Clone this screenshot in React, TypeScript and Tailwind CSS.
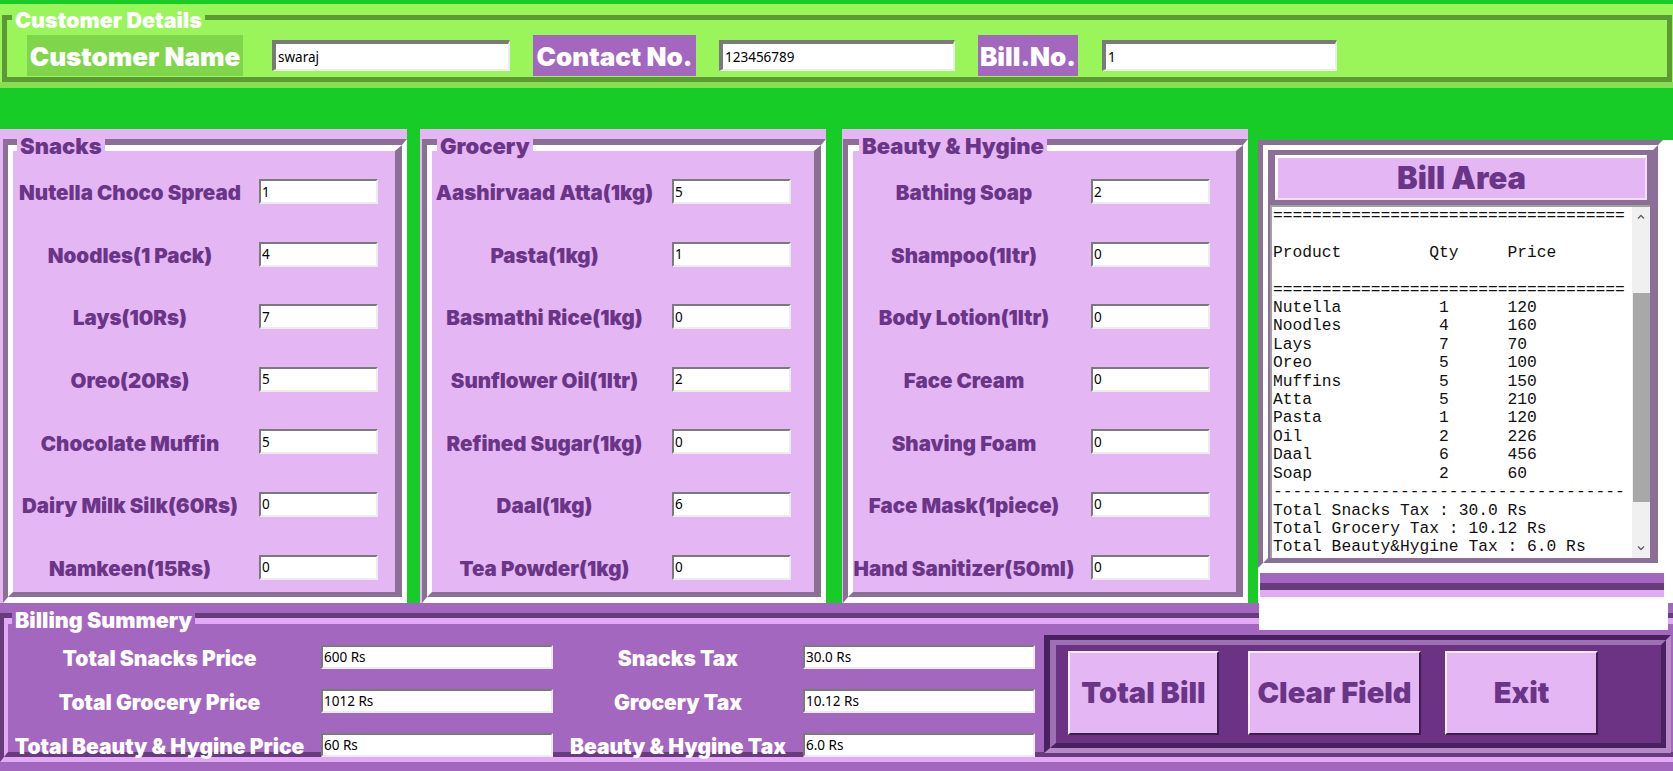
import React from "react";

const heavy = "font-['Inter',sans-serif] font-black";
const entryFont = "font-['Noto_Sans',sans-serif] text-[13.5px] text-black";

const snacks: [string, string][] = [
  ["Nutella Choco Spread", "1"],
  ["Noodles(1 Pack)", "4"],
  ["Lays(10Rs)", "7"],
  ["Oreo(20Rs)", "5"],
  ["Chocolate Muffin", "5"],
  ["Dairy Milk Silk(60Rs)", "0"],
  ["Namkeen(15Rs)", "0"],
];

const grocery: [string, string][] = [
  ["Aashirvaad Atta(1kg)", "5"],
  ["Pasta(1kg)", "1"],
  ["Basmathi Rice(1kg)", "0"],
  ["Sunflower Oil(1ltr)", "2"],
  ["Refined Sugar(1kg)", "0"],
  ["Daal(1kg)", "6"],
  ["Tea Powder(1kg)", "0"],
];

const beauty: [string, string][] = [
  ["Bathing Soap", "2"],
  ["Shampoo(1ltr)", "0"],
  ["Body Lotion(1ltr)", "0"],
  ["Face Cream", "0"],
  ["Shaving Foam", "0"],
  ["Face Mask(1piece)", "0"],
  ["Hand Sanitizer(50ml)", "0"],
];

const billItems: [string, string, string][] = [
  ["Nutella", "1", "120"],
  ["Noodles", "4", "160"],
  ["Lays", "7", "70"],
  ["Oreo", "5", "100"],
  ["Muffins", "5", "150"],
  ["Atta", "5", "210"],
  ["Pasta", "1", "120"],
  ["Oil", "2", "226"],
  ["Daal", "6", "456"],
  ["Soap", "2", "60"],
];

const billLines = [
  "====================================",
  "",
  "Product         Qty     Price",
  "",
  "====================================",
  ...billItems.map(([n, q, p]) => n.padEnd(17) + q.padEnd(7) + p),
  "------------------------------------",
  "Total Snacks Tax : 30.0 Rs",
  "Total Grocery Tax : 10.12 Rs",
  "Total Beauty&Hygine Tax : 6.0 Rs",
];

const summary = [
  ["Total Snacks Price", "600 Rs", "Snacks Tax", "30.0 Rs"],
  ["Total Grocery Price", "1012 Rs", "Grocery Tax", "10.12 Rs"],
  ["Total Beauty & Hygine Price", "60 Rs", "Beauty & Hygine Tax", "6.0 Rs"],
];

function Entry({ value, className = "" }: { value: string; className?: string }) {
  return (
    <input
      readOnly
      value={value}
      className={`bg-white outline-none pl-[1px] border-t-2 border-l-2 border-b-2 border-r-2 border-t-[#7a7a7a] border-l-[#7a7a7a] border-b-[#ececec] border-r-[#ececec] ${entryFont} ${className}`}
    />
  );
}

function Panel({
  title,
  items,
  cols,
  className,
}: {
  title: string;
  items: [string, string][];
  cols: string;
  className: string;
}) {
  return (
    <div className={`relative bg-[#e4b6f4] pt-[10px] h-[474px] ${className}`}>
      <span className={`absolute top-[6px] left-[17px] px-[3px] bg-[#e4b6f4] text-[22px] leading-[22px] text-[#6a3586] ${heavy}`}>
        {title}
      </span>
      <div className="h-full border-t-[6px] border-l-[5px] border-b-[6px] border-r-[5px] border-t-[#8b6f96] border-l-[#8b6f96] border-b-white border-r-white">
        <div className="h-full pt-[28px] border-t-[6px] border-l-[5px] border-b-[5px] border-r-[7px] border-t-white border-l-white border-b-[#8b6f96] border-r-[#8b6f96]">
          <div className={`grid ${cols} gap-y-[37.6px]`}>
            {items.map(([label, qty]) => (
              <React.Fragment key={label}>
                <div className={`h-[25px] pt-[4px] flex items-center justify-center whitespace-nowrap text-[20.5px] text-[#6a3586] ${heavy}`}>
                  {label}
                </div>
                <Entry value={qty} className="w-[119px] h-[25px]" />
              </React.Fragment>
            ))}
          </div>
        </div>
      </div>
    </div>
  );
}

function Chevron({ up }: { up?: boolean }) {
  return (
    <svg width="10" height="10" viewBox="0 0 10 10" className="block">
      <polyline
        points={up ? "2,6.5 5,3.5 8,6.5" : "2,3.5 5,6.5 8,3.5"}
        fill="none"
        stroke="#606060"
        strokeWidth="1.3"
      />
    </svg>
  );
}

function BillArea() {
  return (
    <div className="ml-[10px] mt-[11px] w-[415px] h-[463px] bg-white">
      <div className="w-[405px] h-[428px] border-t-[5px] border-l-[5px] border-b-[5px] border-r-[5px] border-t-[#8b6f96] border-l-[#8b6f96] border-b-white border-r-white">
        <div className="h-full bg-[#8b6f96] flex flex-col border-t-[5px] border-l-[5px] border-b-[5px] border-r-[5px] border-t-white border-l-white border-b-[#8b6f96] border-r-[#8b6f96]">
          <div className="h-[55px] pt-[5px] pl-[7px] pr-[6px] pb-[5px]">
            <div className={`h-full bg-[#e4b6f4] flex items-center justify-center border-t-[3px] border-l-[3px] border-b-[2px] border-r-[2px] border-t-white border-l-white border-b-[#f3ddf9] border-r-[#f3ddf9] text-[31px] text-[#6a3586] ${heavy}`}>
              Bill Area
            </div>
          </div>
          <div className="flex-1 ml-[2px] mr-[3px] bg-white flex overflow-hidden border-t-2 border-l-2 border-t-[#a0a0a0] border-l-[#a0a0a0]">
            <pre className="flex-1 pl-[1px] overflow-hidden font-['Liberation_Mono',monospace] text-[16.3px] leading-[18.4px] text-[#111]">
              {billLines.join("\n")}
            </pre>
            <div className="w-[18px] bg-[#f0f0f0] flex flex-col items-center">
              <div className="h-[20px] flex items-center justify-center">
                <Chevron up />
              </div>
              <div className="mt-[66px] w-[17px] h-[209px] bg-[#a8a8a8]" />
              <div className="flex-1" />
              <div className="h-[20px] flex items-center justify-center">
                <Chevron />
              </div>
            </div>
          </div>
        </div>
      </div>
      <div className="mt-[5px] ml-[2px] w-[404px]">
        <div className="h-[10px] bg-[#a467bf]" />
        <div className="h-[7px] bg-[#683b7d]" />
        <div className="h-[7px] bg-[#e2a9f5]" />
      </div>
    </div>
  );
}

function Button({ label, className }: { label: string; className: string }) {
  return (
    <button
      type="button"
      className={`h-[84px] bg-[#e4b6f4] flex items-center justify-center whitespace-nowrap border-t-2 border-l-2 border-b-2 border-r-2 border-t-[#fbeeff] border-l-[#fbeeff] border-b-[#3d1d4b] border-r-[#3d1d4b] text-[29px] text-[#6a3586] ${heavy} ${className}`}
    >
      {label}
    </button>
  );
}

export default function App() {
  return (
    <div className="relative w-[1673px] h-[771px] overflow-hidden bg-[#18cc28]">
      {/* Customer details */}
      <div className="pt-[4px]">
        <div className="relative bg-[#9af55b] pt-[11px] pl-[2px] pr-[1px] border-b-[6px] border-b-[#86de52]">
          <span className={`absolute top-[5px] left-[12px] px-[3px] bg-[#9af55b] text-white text-[21.5px] leading-[22px] ${heavy}`}>
            Customer Details
          </span>
          <div className="h-[67px] border-[5px] border-[#5d9a35] flex items-start pt-[15px]">
            <div className={`ml-[20px] w-[216px] h-[41px] pt-[2px] bg-[#7fd64b] flex items-center justify-center whitespace-nowrap text-white text-[26px] ${heavy}`}>
              Customer Name
            </div>
            <Entry value="swaraj" className="ml-[29px] mt-[5px] w-[238px] h-[31px] border-t-4 border-l-4 pl-[2px]" />
            <div className={`ml-[23px] w-[163px] h-[41px] pt-[2px] bg-[#a467bf] flex items-center justify-center whitespace-nowrap text-white text-[26px] ${heavy}`}>
              Contact No.
            </div>
            <Entry value="123456789" className="ml-[23px] mt-[5px] w-[236px] h-[31px] border-t-4 border-l-4 pl-[2px]" />
            <div className={`ml-[23px] w-[100px] h-[41px] pt-[2px] bg-[#a467bf] flex items-center justify-center whitespace-nowrap text-white text-[26px] ${heavy}`}>
              Bill.No.
            </div>
            <Entry value="1" className="ml-[24px] mt-[5px] w-[235px] h-[31px] border-t-4 border-l-4 pl-[2px]" />
          </div>
        </div>
      </div>

      {/* Product panels and bill */}
      <div className="mt-[41px] flex items-start h-[474px]">
        <Panel title="Snacks" items={snacks} cols="grid-cols-[234px_119px] gap-x-[12px]" className="w-[407px] pl-[3px]" />
        <Panel title="Grocery" items={grocery} cols="grid-cols-[225px_119px] gap-x-[15px]" className="ml-[13px] w-[406px] pl-[2px]" />
        <Panel title="Beauty & Hygine" items={beauty} cols="grid-cols-[222px_119px] gap-x-[16px]" className="ml-[16px] w-[406px] pl-[1px]" />
        <BillArea />
      </div>

      {/* Billing summary */}
      <div className="relative h-[168px] bg-[#a467bf] pt-[10px]">
        <span className={`absolute top-[6px] left-[12px] px-[3px] bg-[#a467bf] text-white text-[21.5px] leading-[22px] ${heavy}`}>
          Billing Summery
        </span>
        <div className="border-t-[5px] border-l-[4px] border-b-[5px] border-t-[#683b7d] border-l-[#683b7d] border-b-[#e2a9f5]">
          <div className="h-[139px] flex border-t-[6px] border-l-[4px] border-b-[5px] border-t-[#e2a9f5] border-l-[#e2a9f5] border-b-[#683b7d]">
            <div className="pt-[21px] grid grid-cols-[303px_232px_230px_232px] gap-x-[10px] gap-y-[20px] content-start">
              {summary.map(([l1, v1, l2, v2]) => (
                <React.Fragment key={l1}>
                  <div className={`h-[24px] pt-[4px] flex items-center justify-center whitespace-nowrap text-white text-[21px] ${heavy}`}>{l1}</div>
                  <Entry value={v1} className="w-[232px] h-[24px]" />
                  <div className={`h-[24px] pt-[4px] flex items-center justify-center whitespace-nowrap text-white text-[21px] ${heavy}`}>{l2}</div>
                  <Entry value={v2} className="w-[232px] h-[24px]" />
                </React.Fragment>
              ))}
            </div>
            <div className="ml-[9px] mt-[11px] w-[627px] h-[118px] border-t-[5px] border-l-[6px] border-b-[5px] border-r-[5px] border-t-[#4a2160] border-l-[#4a2160] border-b-[#b58ac6] border-r-[#b58ac6]">
              <div className="h-full bg-[#6c3384] flex items-start pt-[6px] pl-[12px] border-t-[5px] border-l-[6px] border-b-[5px] border-r-[5px] border-t-[#9d6fb3] border-l-[#9d6fb3] border-b-[#4a2160] border-r-[#4a2160]">
                <Button label="Total Bill" className="w-[151px]" />
                <Button label="Clear Field" className="ml-[29px] w-[173px]" />
                <Button label="Exit" className="ml-[24px] w-[153px]" />
              </div>
            </div>
          </div>
        </div>
      </div>

      {/* white block that sits over the summary frame */}
      <div className="absolute left-[1259px] top-[603px] w-[409px] h-[27px] bg-white" />
    </div>
  );
}
